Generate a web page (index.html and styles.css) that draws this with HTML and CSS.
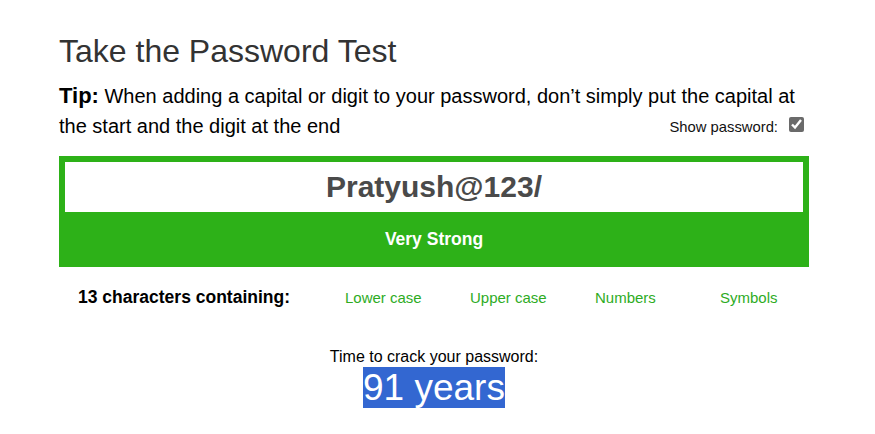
FILE: index.html
```html
<!DOCTYPE html>
<html lang="en">
<head>
<meta charset="utf-8">
<title>Take the Password Test</title>
<link rel="stylesheet" href="styles.css">
</head>
<body>
<main class="page">
  <h1 class="title">Take the Password Test</h1>
  <p class="tip"><strong class="tip-label">Tip:</strong> When adding a capital or digit to your password, don’t simply put the capital at the start and the digit at the end<label class="show"><span class="show-text">Show password:</span><input class="show-box" type="checkbox" checked></label></p>

  <section class="meter">
    <div class="pw-field">Pratyush@123/</div>
    <div class="strength">Very Strong</div>
  </section>

  <div class="features">
    <div class="count">13 characters containing:</div>
    <div class="feat">Lower case</div>
    <div class="feat">Upper case</div>
    <div class="feat">Numbers</div>
    <div class="feat">Symbols</div>
  </div>

  <div class="crack">
    <div class="crack-label">Time to crack your password:</div>
    <div class="crack-time"><span class="crack-value">91 years</span></div>
  </div>
</main>
</body>
</html>
```
FILE: styles.css
```css
html, body {
  margin: 0;
  padding: 0;
  background: #fff;
}

body {
  font-family: "Liberation Sans", Arial, sans-serif;
  color: #000;
}

.page {
  width: 750px;
  margin-left: 59px;
  padding-top: 33px;
}

.title {
  margin: 0;
  font-size: 32px;
  font-weight: normal;
  line-height: 37px;
  color: #333;
}

.tip {
  margin: 11px 0 0;
  font-size: 20px;
  line-height: 30px;
  color: #000;
}

.tip-label {
  font-size: 22px;
  line-height: 20px;
}

.show {
  float: right;
  display: flex;
  align-items: center;
  margin-top: 5px;
  margin-right: 5px;
  font-size: 14.8px;
  line-height: 22px;
  color: #111;
}

.show-box {
  width: 15px;
  height: 15px;
  margin: 0 0 6px 11px;
  accent-color: #6a6a6a;
}

.meter {
  margin-top: 15px;
  background: #2db118;
  padding: 6px 6px 0;
}

.pw-field {
  height: 50px;
  background: #fff;
  color: #4a4a4a;
  font-size: 30px;
  font-weight: bold;
  line-height: 50px;
  text-align: center;
}

.strength {
  height: 55px;
  color: #fff;
  font-size: 17.5px;
  font-weight: bold;
  line-height: 55px;
  text-align: center;
}

.features {
  display: grid;
  grid-template-columns: 267px repeat(4, 125px);
  align-items: baseline;
  margin-top: 19px;
  padding-left: 19px;
}

.count {
  font-size: 17.5px;
  font-weight: bold;
  color: #000;
}

.feat {
  font-size: 15px;
  color: #2eac1f;
  padding-top: 3px;
}

.crack {
  margin-top: 40px;
  text-align: center;
}

.crack-label {
  font-size: 16px;
  line-height: 18px;
  color: #000;
}

.crack-time {
  font-size: 37px;
  line-height: 43px;
}

.crack-value {
  background: #3367d1;
  color: #fff;
}
```
